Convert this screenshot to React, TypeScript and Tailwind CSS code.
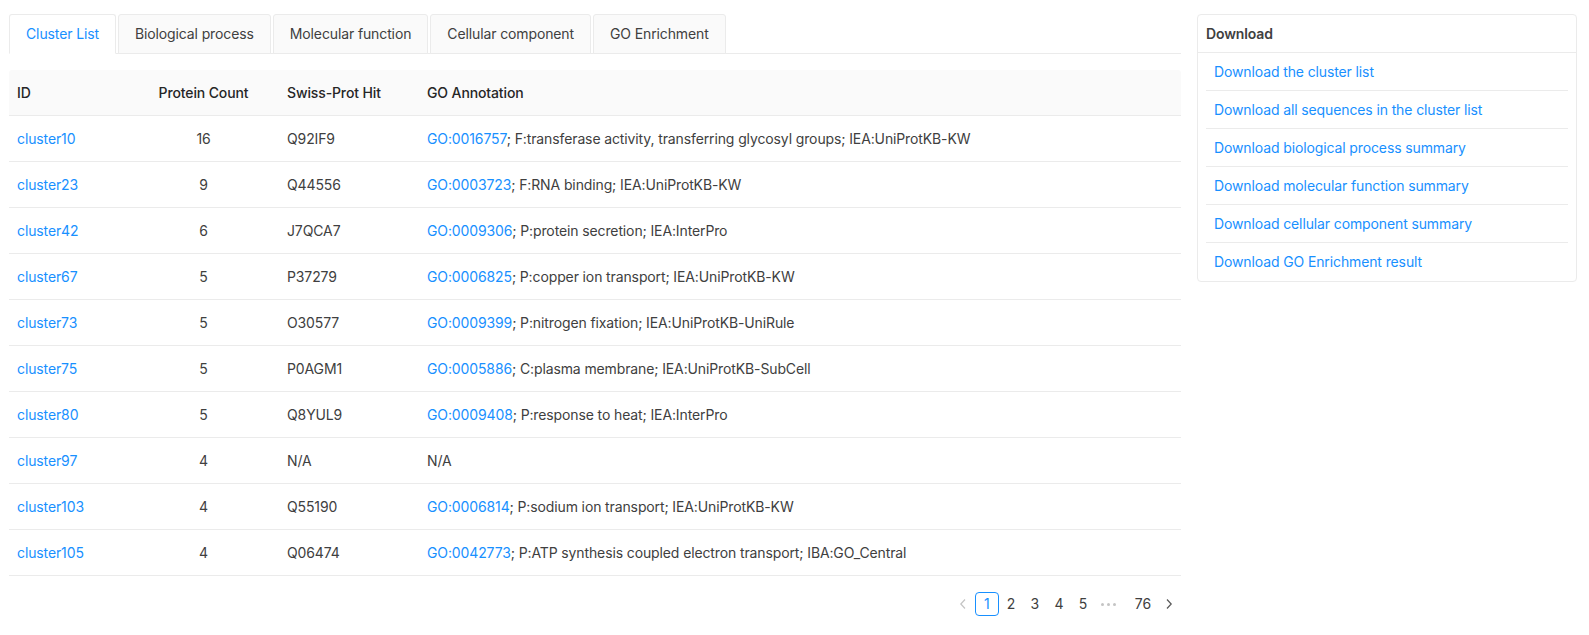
import React from "react";

const tabs = [
  "Cluster List",
  "Biological process",
  "Molecular function",
  "Cellular component",
  "GO Enrichment",
];

const rows = [
  { id: "cluster10", count: 16, hit: "Q92IF9", go: "GO:0016757", note: "; F:transferase activity, transferring glycosyl groups; IEA:UniProtKB-KW" },
  { id: "cluster23", count: 9, hit: "Q44556", go: "GO:0003723", note: "; F:RNA binding; IEA:UniProtKB-KW" },
  { id: "cluster42", count: 6, hit: "J7QCA7", go: "GO:0009306", note: "; P:protein secretion; IEA:InterPro" },
  { id: "cluster67", count: 5, hit: "P37279", go: "GO:0006825", note: "; P:copper ion transport; IEA:UniProtKB-KW" },
  { id: "cluster73", count: 5, hit: "O30577", go: "GO:0009399", note: "; P:nitrogen fixation; IEA:UniProtKB-UniRule" },
  { id: "cluster75", count: 5, hit: "P0AGM1", go: "GO:0005886", note: "; C:plasma membrane; IEA:UniProtKB-SubCell" },
  { id: "cluster80", count: 5, hit: "Q8YUL9", go: "GO:0009408", note: "; P:response to heat; IEA:InterPro" },
  { id: "cluster97", count: 4, hit: "N/A", go: "", note: "N/A" },
  { id: "cluster103", count: 4, hit: "Q55190", go: "GO:0006814", note: "; P:sodium ion transport; IEA:UniProtKB-KW" },
  { id: "cluster105", count: 4, hit: "Q06474", go: "GO:0042773", note: "; P:ATP synthesis coupled electron transport; IBA:GO_Central" },
];

const downloads = [
  "Download the cluster list",
  "Download all sequences in the cluster list",
  "Download biological process summary",
  "Download molecular function summary",
  "Download cellular component summary",
  "Download GO Enrichment result",
];

const Chevron = ({ dir, color }: { dir: "left" | "right"; color: string }) => (
  <svg width="8" height="12" viewBox="0 0 8 12" fill="none">
    <path
      d={dir === "left" ? "M6 1.5 1.8 6 6 10.5" : "M2 1.5 6.2 6 2 10.5"}
      stroke={color}
      strokeWidth="1.2"
    />
  </svg>
);

export default function App() {
  return (
    <div className="flex gap-4 pl-[9px] pr-[12px] pt-[14px] font-[Inter,sans-serif] text-[14px] leading-[22px] tracking-[-0.12px] text-[#262626] bg-white min-h-screen">
      {/* Left side */}
      <div className="flex-1 min-w-0">
        {/* Tabs */}
        <div className="flex gap-[2px] border-b border-[#ebebeb] mb-4">
          {tabs.map((t, i) => (
            <div
              key={t}
              className={
                i === 0
                  ? "h-[40px] -mb-px px-4 flex items-center border border-[#ebebeb] border-b-white rounded-t-[3px] bg-white text-[#1890ff]"
                  : "h-[40px] -mb-px px-4 flex items-center border border-[#ebebeb] rounded-t-[3px] bg-[#fafafa] text-[#404040]"
              }
            >
              {t}
            </div>
          ))}
        </div>

        {/* Table */}
        <div className="w-full">
          <div className="flex h-[46px] items-center bg-[#fafafa] border-b border-[#ebebeb] rounded-t-[3px] font-medium">
            <div className="w-[119px] px-2">ID</div>
            <div className="w-[151px] px-2 text-center">Protein Count</div>
            <div className="w-[140px] px-2">Swiss-Prot Hit</div>
            <div className="flex-1 px-2">GO Annotation</div>
          </div>
          {rows.map((r) => (
            <div key={r.id} className="flex h-[46px] items-center border-b border-[#ebebeb] text-[#404040]">
              <div className="w-[119px] px-2 text-[#1890ff]">{r.id}</div>
              <div className="w-[151px] px-2 text-center">{r.count}</div>
              <div className="w-[140px] px-2">{r.hit}</div>
              <div className="flex-1 px-2">
                {r.go && <span className="text-[#1890ff]">{r.go}</span>}
                {r.note}
              </div>
            </div>
          ))}
        </div>

        {/* Pagination */}
        <div className="flex justify-end items-center mt-4 h-[24px]">
          <div className="w-[24px] h-[24px] flex items-center justify-center">
            <Chevron dir="left" color="#c4c4c4" />
          </div>
          <div className="w-[24px] h-[24px] flex items-center justify-center border border-[#1890ff] rounded-[4px] text-[#1890ff]">
            1
          </div>
          {[2, 3, 4, 5].map((n) => (
            <div key={n} className="w-[24px] h-[24px] flex items-center justify-center text-[#404040]">
              {n}
            </div>
          ))}
          <div className="w-[24px] h-[24px] ml-[2px] mr-[8px] flex items-center justify-center gap-[3px]">
            <span className="w-[3px] h-[3px] rounded-full bg-[#c4c4c4]" />
            <span className="w-[3px] h-[3px] rounded-full bg-[#c4c4c4]" />
            <span className="w-[3px] h-[3px] rounded-full bg-[#c4c4c4]" />
          </div>
          <div className="min-w-[24px] px-[6px] h-[24px] flex items-center justify-center text-[#404040]">76</div>
          <div className="w-[24px] h-[24px] flex items-center justify-center">
            <Chevron dir="right" color="#595959" />
          </div>
        </div>
      </div>

      {/* Right side */}
      <div className="w-[380px] shrink-0 self-start border border-[#ebebeb] rounded-[4px]">
        <div className="h-[38px] px-2 flex items-center border-b border-[#ebebeb] font-semibold text-[#404040]">
          Download
        </div>
        <div className="px-2">
          {downloads.map((d, i) => (
            <div
              key={d}
              className={
                i < downloads.length - 1
                  ? "h-[38px] px-2 flex items-center border-b border-[#ebebeb] text-[#1890ff]"
                  : "h-[38px] px-2 flex items-center text-[#1890ff]"
              }
            >
              {d}
            </div>
          ))}
        </div>
      </div>
    </div>
  );
}
